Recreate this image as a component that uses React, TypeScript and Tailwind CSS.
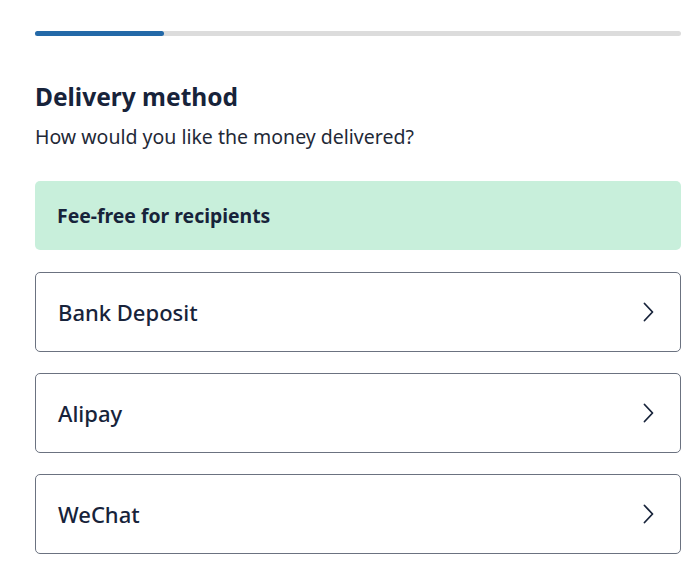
const methods = ["Bank Deposit", "Alipay", "WeChat"];

function Chevron() {
  return (
    <svg width="12" height="20" viewBox="0 0 12 20" fill="none" className="text-[#17233a]">
      <path d="M2.5 1.5 L10.5 10 L2.5 18.5" stroke="currentColor" strokeWidth="1.8" strokeLinecap="round" strokeLinejoin="round" />
    </svg>
  );
}

export default function App() {
  return (
    <div
      className="min-h-screen bg-white pl-[35px] pr-[19px] pt-[31px] text-[#17233a]"
      style={{ fontFamily: '"Noto Sans", "Open Sans", sans-serif' }}
    >
      {/* progress */}
      <div className="h-[5px] w-full rounded-full bg-[#dcdcdc]">
        <div className="h-full w-[129px] rounded-full bg-[#2369a8]" />
      </div>

      <h1 className="mt-[45px] text-[24.5px] font-bold leading-[32px]">Delivery method</h1>
      <p className="mt-[11px] text-[19.5px] leading-[26px] text-[#1f2937]">
        How would you like the money delivered?
      </p>

      <div className="mt-[31px] flex h-[69px] items-center rounded-[5px] bg-[#c8efdb] px-[22px]">
        <span className="text-[19.4px] font-bold">Fee-free for recipients</span>
      </div>

      <div className="mt-[22px] flex flex-col gap-[21px]">
        {methods.map((m) => (
          <button
            key={m}
            className="flex h-[80px] items-center justify-between rounded-[5px] border border-[#6b7280] bg-white pl-[22px] pr-[26px] text-left"
          >
            <span className="text-[22px] font-medium">{m}</span>
            <Chevron />
          </button>
        ))}
      </div>
    </div>
  );
}
